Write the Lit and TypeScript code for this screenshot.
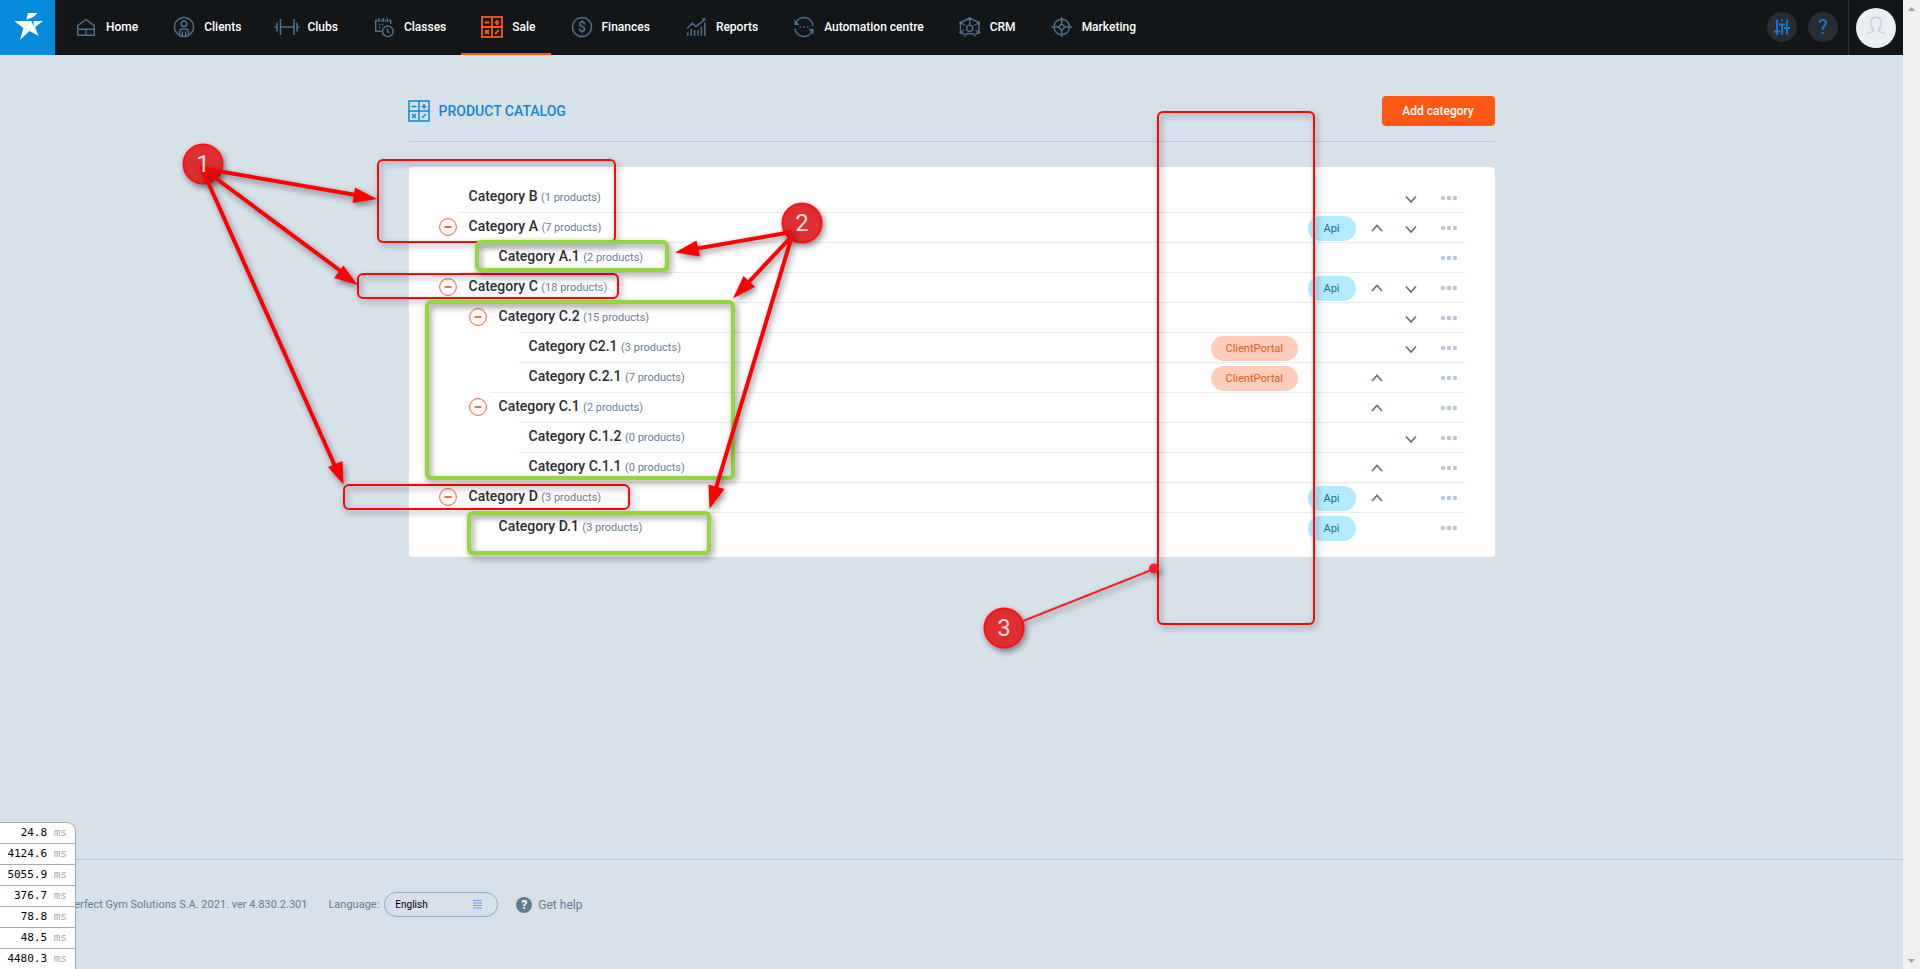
import { LitElement, html, svg, css, nothing } from "lit";
import { customElement, property } from "lit/decorators.js";
import { classMap } from "lit/directives/class-map.js";

const calculator = svg`
  <g fill="none" stroke="currentColor" stroke-width="1.5">
    <rect x="3" y="3" width="20" height="20"/>
    <path d="M13 3v20M3 13h20M5.500 8.500h5M15.500 8.500h5M18 6v5M6 16l4 4M10 16l-4 4M16 20l4-4"/>
  </g>`;

const icons: Record<string, unknown> = {
  home: svg`<g fill="none" stroke="currentColor" stroke-width="1.4"><path d="M4.700 21.300V11.700L13 5.500l8.300 6.200v9.600zM4.700 15.300h16.600M13 15.300v6"/></g>`,
  clients: svg`<g fill="none" stroke="currentColor" stroke-width="1.5"><circle cx="13" cy="13" r="9.600"/><circle cx="13" cy="9.800" r="2.800"/><path d="M8.500 21v-3.500a3 3 0 0 1 3-2.500h3a3 3 0 0 1 3 2.500V21M11.300 22v-4.500M14.700 22v-4.500"/></g>`,
  clubs: svg`<g fill="none" stroke="currentColor" stroke-width="1.5"><path d="M6.500 5v16M20 5v16M3 8.500v9M23 8.500v9M.5 13H3M23 13h2.500M6.500 13H20"/></g>`,
  classes: svg`<g fill="none" stroke="currentColor" stroke-width="1.400"><path d="M10.500 17.300H4.700V6.500h2M9.500 6.500h1.500M13.500 6.500h1.500M17.500 6.500h2.200V10M8 4v4M12.300 4v4M16.300 4v4"/><circle cx="16.800" cy="17.300" r="5.300"/><path d="M16.500 14.500v3l2 1.500M8 10.500h1.500M11 10.500h1.500M8 13.500h1.500"/></g>`,
  sale: calculator,
  finances: svg`<circle cx="13" cy="13" r="9.600" fill="none" stroke="currentColor" stroke-width="1.500"/><text x="13" y="18" text-anchor="middle" font-size="14" fill="currentColor">$</text>`,
  reports: svg`<g fill="none" stroke="currentColor" stroke-width="1.500"><path d="M4 14.500l5.300-5.200 3.700 3.200L22.500 5M19 5h3.500M4.700 21.700V18.500M8.200 21.700V15M11.600 21.700V16M15 21.700V16M18.400 21.700V12.500M21.800 21.700V8.500"/></g>`,
  automation: svg`<g fill="none" stroke="currentColor" stroke-width="1.500"><path d="M5 8.500a9 9 0 0 1 17 3.500M21 17.500A9 9 0 0 1 4 14.500"/><path d="M8.500 13h1.500M12.200 13h1.500M16 13h1.500"/></g><path fill="currentColor" d="M3.500 5.500v5.500h5zM22.500 20.500v-5.500h-5z"/>`,
  crm: svg`<g fill="none" stroke="currentColor" stroke-width="1.400"><path d="M7 20l-3.500-1.500v-10L12.700 4l9.300 4.500v10L18.500 20M12.700 4v6.500M4 9l4.500 2.500M21.500 9l-4.500 2.500M4 18l3-2M21.500 18l-3-2"/><circle cx="12.700" cy="14.300" r="3.100"/><path d="M7.500 22.500c0-4 10.500-4 10.500 0"/></g><g fill="currentColor"><circle cx="12.700" cy="4.500" r="1.600"/><circle cx="3.800" cy="8.800" r="1.600"/><circle cx="21.700" cy="8.800" r="1.600"/><circle cx="3.800" cy="18.300" r="1.600"/><circle cx="21.700" cy="18.300" r="1.600"/></g>`,
  marketing: svg`<g fill="none" stroke="currentColor" stroke-width="1.500"><circle cx="12.700" cy="13" r="7.700"/><path d="M12.700 9.800l3.200 3.200-3.200 3.200L9.500 13zM2.500 13h7M16 13h7M12.700 3v6.800M12.700 16.200V23"/></g>`,
};

const glyph = (name: string) =>
  html`<svg class="glyph" viewBox="0 0 26 26" aria-hidden="true">${icons[name]}</svg>`;

const NAV = [
  ["home", "Home"],
  ["clients", "Clients"],
  ["clubs", "Clubs"],
  ["classes", "Classes"],
  ["sale", "Sale"],
  ["finances", "Finances"],
  ["reports", "Reports"],
  ["automation", "Automation centre"],
  ["crm", "CRM"],
  ["marketing", "Marketing"],
];

interface Category {
  name: string;
  count: number;
  level: number;
  open?: boolean;
  api?: boolean;
  portal?: boolean;
  up?: boolean;
  down?: boolean;
}

const CATEGORIES: Category[] = [
  { name: "Category B", count: 1, level: 0, down: true },
  { name: "Category A", count: 7, level: 0, open: true, api: true, up: true, down: true },
  { name: "Category A.1", count: 2, level: 1 },
  { name: "Category C", count: 18, level: 0, open: true, api: true, up: true, down: true },
  { name: "Category C.2", count: 15, level: 1, open: true, down: true },
  { name: "Category C2.1", count: 3, level: 2, portal: true, down: true },
  { name: "Category C.2.1", count: 7, level: 2, portal: true, up: true },
  { name: "Category C.1", count: 2, level: 1, open: true, up: true },
  { name: "Category C.1.2", count: 0, level: 2, down: true },
  { name: "Category C.1.1", count: 0, level: 2, up: true },
  { name: "Category D", count: 3, level: 0, open: true, api: true, up: true },
  { name: "Category D.1", count: 3, level: 1, api: true },
];

const TIMINGS = ["24.8", "4124.6", "5055.9", "376.7", "78.8", "48.5", "4480.3"];

@customElement("top-bar")
class TopBar extends LitElement {
  static styles = css`
    :host { display: block; }
    .bar { display: flex; height: 55px; background: #121619; }
    .logo { width: 55px; background: #068ad9; }
    .logo svg { display: block; width: 55px; height: 55px; }
    nav { display: flex; flex: 1; }
    .item {
      display: flex; align-items: center; gap: 7px; padding: 0 15px 2px 18px;
      color: #fff; text-decoration: none; font-size: 12px; font-weight: 500;
      line-height: 16px; white-space: nowrap; box-sizing: border-box; height: 55px;
    }
    .glyph { width: 26px; height: 26px; color: #4f708c; flex: none; }
    .active { box-shadow: inset 0 -2px #ff5714; }
    .active .glyph { color: #ff5714; }
    .active .glyph g { stroke-width: 1.8; }
    .tools { display: flex; align-items: center; gap: 11px; padding: 0 10px 1px 0; }
    .tool {
      width: 30px; height: 30px; padding: 0; border: 0; border-radius: 50%;
      background: #272d33; color: #117fda; font: 400 20px/30px Roboto, sans-serif;
    }
    .tool svg { display: block; width: 30px; height: 30px; }
    .user { display: flex; align-items: center; padding: 0 7px; border-left: 1px solid #2c3237; }
    .avatar { width: 40px; height: 40px; border: 0; padding: 0; border-radius: 50%; background: #e9eef3; }
    .avatar svg { display: block; width: 40px; height: 40px; }
  `;

  render() {
    return html`<header class="bar">
      <a class="logo" href="#" aria-label="Dashboard">
        <svg viewBox="0 0 165 165" fill="#fff"><path d="M84 39h28l-10 11-23 9zM43 63h51l9 19-3-19h29l-24 19 11 26-28-15-28 27 10-36z"/></svg>
      </a>
      <nav>
        ${NAV.map(([icon, label]) => html`<a href="#" class=${classMap({ item: true, active: icon === "sale" })}>${glyph(icon)}<span>${label}</span></a>`)}
      </nav>
      <div class="tools">
        <button class="tool" aria-label="Settings">
          <svg viewBox="0 0 30 30" fill="none" stroke="currentColor" stroke-width="1.800"><path d="M10 7.500v11M10 20.500v2.500M7 19.500h6M15 7.500v2M15 11.500v11M12 12.500h6M20 7.500v7M20 17v5.500M17 16h6"/></svg>
        </button>
        <button class="tool">?</button>
      </div>
      <div class="user">
        <button class="avatar" aria-label="Profile">
          <svg viewBox="0 0 40 40" fill="none" stroke="#c5d3de" stroke-width="1.600"><path d="M11 25.500c4-1 7-1.500 6.500-4C15 19 14.500 16 14.800 14c.4-3 2.500-4.700 5.200-4.700s4.800 1.700 5.200 4.700c.3 2-.2 5-2.700 7.500-.5 2.500 2.500 3 6.500 4"/></svg>
        </button>
      </div>
    </header>`;
  }
}

@customElement("category-row")
class CategoryRow extends LitElement {
  @property({ attribute: false }) item!: Category;
  @property({ type: Boolean }) first = false;

  static styles = css`
    :host { display: block; }
    .row { display: flex; height: 30px; padding-left: 20px; }
    .level1 { padding-left: 50px; }
    .level2 { padding-left: 80px; }
    .lead { width: 20px; display: flex; align-items: center; }
    .toggle { width: 18px; height: 18px; padding: 0; border: 0; background: none; color: #ff5a2c; }
    svg { display: block; }
    .line {
      flex: 1; display: grid; grid-template-columns: 1fr 97px 52px 34px 34px 37px;
      align-items: center; box-sizing: border-box; border-top: 1px solid #ebebeb; padding: 0 0 1px 10px;
    }
    .first .line { border-top-color: transparent; }
    .name { color: #2b2d2f; font-size: 14px; font-weight: 500; line-height: 26px; text-decoration: none; padding-bottom: 2px; }
    .count { color: #6b7d8f; font-size: 11px; font-weight: 400; }
    .tag { justify-self: start; box-sizing: border-box; height: 25px; padding: 0 15px; border-radius: 13px; font-size: 11px; line-height: 25px; }
    .portal { background: #ffcdb9; color: #d6601f; }
    .api { background: #b3eaff; color: #10709a; padding: 0 16px; }
    .act { padding: 0; border: 0; background: none; height: 26px; display: flex; align-items: center; justify-content: center; color: #587086; }
    .more { color: #b8c8d6; padding-left: 5px; grid-column: 6; }
    .act svg { width: 18px; height: 12px; }
  `;

  private chevron(label: string, d: string) {
    return html`<button class="act" aria-label=${label}>
      <svg viewBox="0 0 18 12" fill="none" stroke="currentColor" stroke-width="1.600"><path d=${d}/></svg>
    </button>`;
  }

  render() {
    const c = this.item;
    return html`<div class=${classMap({ row: true, first: this.first, level1: c.level === 1, level2: c.level === 2 })}>
      <div class="lead">
        ${c.open
          ? html`<button class="toggle" aria-label="Collapse">
              <svg width="18" height="18" viewBox="0 0 18 18" fill="none" stroke="currentColor"><circle cx="9" cy="9" r="8.400"/><path d="M5.500 9h7" stroke-width="1.800"/></svg>
            </button>`
          : nothing}
      </div>
      <div class="line">
        <a class="name" href="#">${c.name} <span class="count">(${c.count} products)</span></a>
        ${c.portal ? html`<span class="tag portal">ClientPortal</span>` : html`<span></span>`}
        ${c.api ? html`<span class="tag api">Api</span>` : html`<span></span>`}
        ${c.up ? this.chevron("Move up", "M4 9l5-5.500L14 9") : html`<span></span>`}
        ${c.down ? this.chevron("Move down", "M4 4.500l5 5.500 5-5.500") : html`<span></span>`}
        <button class="act more" aria-label="More">
          <svg viewBox="0 0 18 12" fill="currentColor"><circle cx="3" cy="6" r="2.200"/><circle cx="9" cy="6" r="2.200"/><circle cx="15" cy="6" r="2.200"/></svg>
        </button>
      </div>
    </div>`;
  }
}

@customElement("callout-layer")
class CalloutLayer extends LitElement {
  static styles = css`
    :host { position: absolute; top: 0; left: 0; pointer-events: none; }
    svg { display: block; width: 1903px; height: 700px; font-family: Roboto, sans-serif; }
    .mark { filter: drop-shadow(2px 3px 3px rgba(0, 0, 0, 0.45)); }
    .red { fill: none; stroke: #ff0508; stroke-width: 2; }
    .green { fill: none; stroke: #93d73f; stroke-width: 4; }
    .shaft { fill: none; stroke: #ff0000; stroke-width: 4; }
    .head { fill: #ff0000; }
    .thin { fill: none; stroke: #f52027; stroke-width: 2; }
    .disc { fill: #dd2e32; stroke: #ff1014; stroke-width: 2; }
    .num { fill: #fbdcdc; font-size: 24px; text-anchor: middle; }
  `;

  render() {
    const red = [[378, 160, 237, 82], [358, 274, 260, 24], [344, 485, 285, 24], [1158, 112, 156, 512]];
    const green = [[477, 242, 190, 28], [427, 302, 306, 176], [469, 513, 240, 40]];
    return html`<svg viewBox="0 0 1903 700">
      ${red.map(([x, y, w, h]) => svg`<g class="mark"><rect class="red" x=${x} y=${y} width=${w} height=${h} rx="5"/></g>`)}
      ${green.map(([x, y, w, h]) => svg`<g class="mark"><rect class="green" x=${x} y=${y} width=${w} height=${h} rx="4"/></g>`)}
      <g class="mark"><circle class="disc" cx="203" cy="164" r="19.500"/></g>
      <g class="mark"><circle class="disc" cx="802" cy="223" r="19.500"/></g>
      <g class="mark"><circle class="disc" cx="1004" cy="628" r="19.500"/></g>
      <g class="mark">
        <path class="shaft" d="M200 168l156 27M202 168l140 104M203 171l132 295"/>
        <path class="head" d="M377 199l-22-11.500-2.500 15.500zM357.500 285L343.500 265.500 334 278zM343.500 484.500L342.500 461 328 467z"/>
      </g>
      <g class="mark">
        <path class="shaft" d="M792 232l-95 16.500M791 237l-45 48M792 236l-76 252"/>
        <path class="head" d="M675 252.500l21.500-12 3.500 16zM733 298.500L743.500 276 755 286.700zM709.500 509l-1-24.500 16 4.500z"/>
      </g>
      <g class="mark"><path class="thin" d="M1023 621l131-52"/><circle cx="1154" cy="568.500" r="5" fill="#f52027"/></g>
      <text class="num" x="203" y="172">1</text>
      <text class="num" x="802" y="231">2</text>
      <text class="num" x="1004" y="636">3</text>
    </svg>`;
  }
}

@customElement("app-root")
class AppRoot extends LitElement {
  static styles = css`
    :host { display: flex; min-height: 100vh; font-family: Roboto, sans-serif; background: #d7e1ea; position: relative; }
    .page { flex: 1; min-width: 0; display: flex; flex-direction: column; }
    .content { width: 100%; max-width: 1086px; margin: 0 auto; flex: 1; }
    .heading { display: flex; align-items: center; gap: 9px; margin-top: 41px; height: 30px; padding-bottom: 15px; border-bottom: 1px solid #b7c9d8; color: #0f87d8; }
    .heading svg { width: 22px; height: 22px; flex: none; margin-left: -1px; }
    h1 { flex: 1; margin: 0; font-size: 14px; font-weight: 500; line-height: 20px; }
    .add { width: 113px; height: 30px; padding: 0; border: 0; border-radius: 4px; background: #ff5714; color: #fff; font: 500 12px/16px Roboto, sans-serif; }
    .card { margin-top: 25px; padding: 15px 30px 15px 10px; background: #fff; border-radius: 4px; }
    ul { list-style: none; margin: 0; padding: 0; }
    footer { display: flex; align-items: center; height: 110px; padding: 0 56px 20px; border-top: 1px solid #b3c8d6; color: #657d92; font-size: 11px; line-height: 16px; box-sizing: border-box; }
    .lang { display: flex; align-items: center; gap: 5px; margin-left: 21px; }
    .pick { display: grid; align-items: center; }
    .pick > * { grid-area: 1 / 1; }
    select { appearance: none; width: 114px; height: 25px; padding: 0 10px; border: 1px solid #93abc0; border-radius: 13px; background: transparent; color: #000; font: 400 10px/16px Roboto, sans-serif; }
    .lines { justify-self: end; margin-right: 16px; pointer-events: none; width: 9px; height: 9px; }
    .help { display: flex; align-items: center; gap: 6px; margin-left: 18px; color: inherit; text-decoration: none; font-size: 12px; }
    .badge { width: 16px; height: 16px; border-radius: 50%; background: #5f7c93; color: #fff; font-weight: 700; font-size: 12px; text-align: center; }
    .timings { position: absolute; left: 0; bottom: 0; width: 75px; background: #fff; border: 1px solid #a9a9a9; border-width: 1px 1px 0 0; border-radius: 0 9px 0 0; font: 11px/20px "DejaVu Sans Mono", monospace; color: #000; }
    .timings li { padding-right: 8px; height: 20px; text-align: right; border-bottom: 1px solid #a9a9a9; }
    .timings li:last-child { border-bottom: 0; }
    .unit { color: #a9a9a9; }
    .scroll { width: 17px; background: #f0f0f0; display: flex; flex-direction: column; justify-content: space-between; }
    .scroll svg { display: block; width: 17px; height: 17px; }
  `;

  render() {
    return html`
      <div class="page">
        <top-bar></top-bar>
        <main class="content">
          <div class="heading">
            <svg viewBox="2 2 22 22" aria-hidden="true">${calculator}</svg>
            <h1>PRODUCT CATALOG</h1>
            <button class="add">Add category</button>
          </div>
          <section class="card">
            <ul>
              ${CATEGORIES.map((c, i) => html`<li><category-row .item=${c} ?first=${i === 0}></category-row></li>`)}
            </ul>
          </section>
        </main>
        <footer>
          <span>© Perfect Gym Solutions S.A. 2021. ver 4.830.2.301</span>
          <div class="lang">
            <label for="language">Language:</label>
            <div class="pick">
              <select id="language"><option>English</option></select>
              <svg class="lines" viewBox="0 0 9 9" stroke="#6f9ddb"><path d="M0 .5h9M0 3h9M0 5.500h9M0 8h9"/></svg>
            </div>
          </div>
          <a class="help" href="#"><span class="badge">?</span>Get help</a>
        </footer>
      </div>
      <div class="scroll" aria-hidden="true">
        <svg viewBox="0 0 17 17" fill="#a3a3a3"><path d="M5 11l3.500-4 3.500 4z"/></svg>
        <svg viewBox="0 0 17 17" fill="#a3a3a3"><path d="M5 7l3.500 4 3.500-4z"/></svg>
      </div>
      <ul class="timings">
        ${TIMINGS.map((t) => html`<li>${t} <span class="unit">ms</span></li>`)}
      </ul>
      <callout-layer></callout-layer>
    `;
  }
}
